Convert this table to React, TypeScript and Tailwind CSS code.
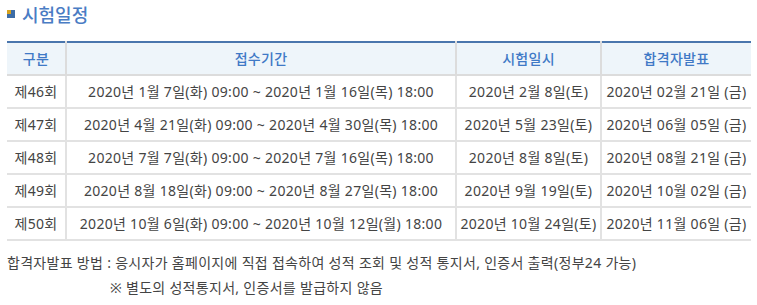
import React from "react";

const ROWS = [
  ["제46회", "2020년 1월 7일(화) 09:00 ~ 2020년 1월 16일(목) 18:00", "2020년 2월 8일(토)", "2020년 02월 21일 (금)"],
  ["제47회", "2020년 4월 21일(화) 09:00 ~ 2020년 4월 30일(목) 18:00", "2020년 5월 23일(토)", "2020년 06월 05일 (금)"],
  ["제48회", "2020년 7월 7일(화) 09:00 ~ 2020년 7월 16일(목) 18:00", "2020년 8월 8일(토)", "2020년 08월 21일 (금)"],
  ["제49회", "2020년 8월 18일(화) 09:00 ~ 2020년 8월 27일(목) 18:00", "2020년 9월 19일(토)", "2020년 10월 02일 (금)"],
  ["제50회", "2020년 10월 6일(화) 09:00 ~ 2020년 10월 12일(월) 18:00", "2020년 10월 24일(토)", "2020년 11월 06일 (금)"],
];

const HEADERS = ["구분", "접수기간", "시험일시", "합격자발표"];
const WIDTHS = ["w-[59px]", "w-[390px]", "w-[145px]", "w-[150px]"];

export default function App() {
  return (
    <div className="w-[757px] h-[305px] bg-white text-[#444] font-['Noto_Sans','Noto_Sans_CJK_KR',sans-serif]">
      {/* Title */}
      <div className="flex items-center gap-[7px] pl-[7px] pt-[3px] h-[24px] font-['Noto_Sans_CJK_KR',sans-serif]">
        <span className="relative w-[8px] h-[8px] bg-[#3d6ca5]">
          <span className="absolute left-0 top-0 w-[4px] h-[4px] bg-[#d6a21e]" />
        </span>
        <h2 className="text-[18px] leading-none font-medium text-[#4a7cc4]">시험일정</h2>
      </div>

      {/* Table */}
      <table className="ml-[7px] mt-[17px] w-[744px] border-collapse table-fixed text-[14px] tracking-[0.3px]">
        <thead>
          <tr className="h-[33px] bg-[#eef5fa] border-t-2 border-[#4a76ad]">
            {HEADERS.map((h, i) => (
              <th
                key={h}
                className={`${WIDTHS[i]} font-medium text-[#3f79c6] border-b-2 border-b-[#dcdcdc] ${i > 0 ? "border-l-2 border-l-[#dcdcdc]" : ""}`}
              >
                {h}
              </th>
            ))}
          </tr>
        </thead>
        <tbody>
          {ROWS.map((r) => (
            <tr key={r[0]} className="h-[33px] border-b-2 border-[#e2e2e2]">
              {r.map((c, i) => (
                <td
                  key={i}
                  className={`text-center whitespace-nowrap ${i > 0 ? "border-l-2 border-l-[#e2e2e2]" : ""}`}
                >
                  {c}
                </td>
              ))}
            </tr>
          ))}
        </tbody>
      </table>

      {/* Note */}
      <div className="text-[14px] tracking-[0.3px] pl-[7px] pt-[9px] leading-[25px]">
        <p>합격자발표 방법 : 응시자가 홈페이지에 직접 접속하여 성적 조회 및 성적 통지서, 인증서 출력(정부24 가능)</p>
        <p className="pl-[103px]">※ 별도의 성적통지서, 인증서를 발급하지 않음</p>
      </div>
    </div>
  );
}
